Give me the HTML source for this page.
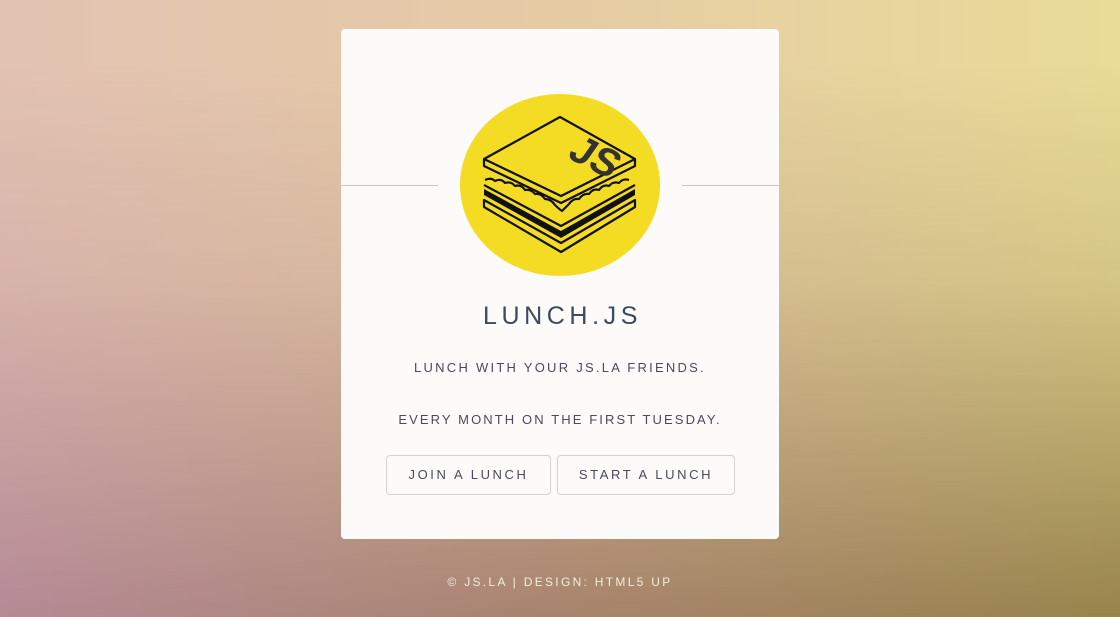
<!DOCTYPE html>
<html><head><style>
html,body{margin:0;width:1120px;height:617px;overflow:hidden;font-family:"Liberation Sans",sans-serif}
body{position:relative;background:linear-gradient(90deg,#b68a96 0%,#a8846e 50%,#98844c 100%)}
.ov{position:absolute;inset:0;background:linear-gradient(90deg,#e2c2b2 0%,#e6caa6 45%,#e8dc98 100%);-webkit-mask-image:linear-gradient(180deg,#000 10%,rgba(0,0,0,.75) 45%,rgba(0,0,0,0) 100%);mask-image:linear-gradient(180deg,#000 10%,rgba(0,0,0,.75) 45%,rgba(0,0,0,0) 100%)}
.card{position:absolute;left:341px;top:29px;width:438px;height:510px;background:#fcfbfa;border-radius:4px}
.hl{position:absolute;top:156px;height:1px;background:#c8c6c2;width:97px}
h1{position:absolute;top:273px;left:0;width:100%;text-align:center;margin:0;font-weight:normal;font-size:25px;letter-spacing:4.6px;color:#3c4a5c;padding-left:5px;box-sizing:border-box}
p{position:absolute;left:0;width:100%;text-align:center;margin:0;font-size:13px;color:#4a4a5a}
.b{position:absolute;top:426px;height:40px;border:1px solid #d4d2d0;border-radius:4px;box-sizing:border-box;text-align:center;line-height:38px;font-size:13px;letter-spacing:2.6px;color:#4a4a5a}
.f{position:absolute;top:575px;left:0;width:100%;text-align:center;font-size:12px;letter-spacing:2.3px;color:#f4ecdc}
</style></head><body><div class="ov"></div>
<div class="card">
<div class="hl" style="left:0"></div><div class="hl" style="right:0"></div>
<svg style="position:absolute;left:0;top:0" width="438" height="260" viewBox="341 29 438 260">
<ellipse cx="560" cy="185" rx="100" ry="91" fill="#f4dc24"/>
<g fill="none" stroke="#111" stroke-width="2.2" stroke-linejoin="round">
<path d="M560 117 L635 159 L635 166 L561 203 L484 166 L484 159 Z"/>
<path d="M484 159 L561 196 L635 159"/>
<path d="M485 180 q6 -3 10 1 q6 -3 10 2 q6 -2 10 3 q6 -2 10 4 q6 -1 10 4 q6 -1 10 5 q6 0 10 6 q4 4 7 6 q3 -3 7 -7 q4 -6 10 -5 q4 -6 10 -5 q4 -6 10 -4 q4 -6 10 -4 q4 -5 10 -3 q4 -5 10 -3"/>
<path d="M484 185 L561 226 L635 185"/>
<path d="M484 200 L484 207 L561 252 L635 207 L635 200 L561 243 Z"/>
</g>
<path d="M484 189 L561 231 L635 189 L635 195 L561 238 L484 195 Z" fill="#111"/>
<text transform="translate(566 157) rotate(27) skewX(-8)" font-family="Liberation Sans,sans-serif" font-weight="bold" font-size="40" fill="#333">JS</text>
</svg>
<h1>LUNCH.JS</h1>
<p style="top:331px;letter-spacing:2.25px">LUNCH WITH YOUR JS.LA FRIENDS.</p>
<p style="top:383px;letter-spacing:2.1px">EVERY MONTH ON THE FIRST TUESDAY.</p>
<div class="b" style="left:45px;width:165px">JOIN A LUNCH</div>
<div class="b" style="left:216px;width:178px">START A LUNCH</div>
</div>
<div class="f">© JS.LA | DESIGN: HTML5 UP</div>
</body></html>
